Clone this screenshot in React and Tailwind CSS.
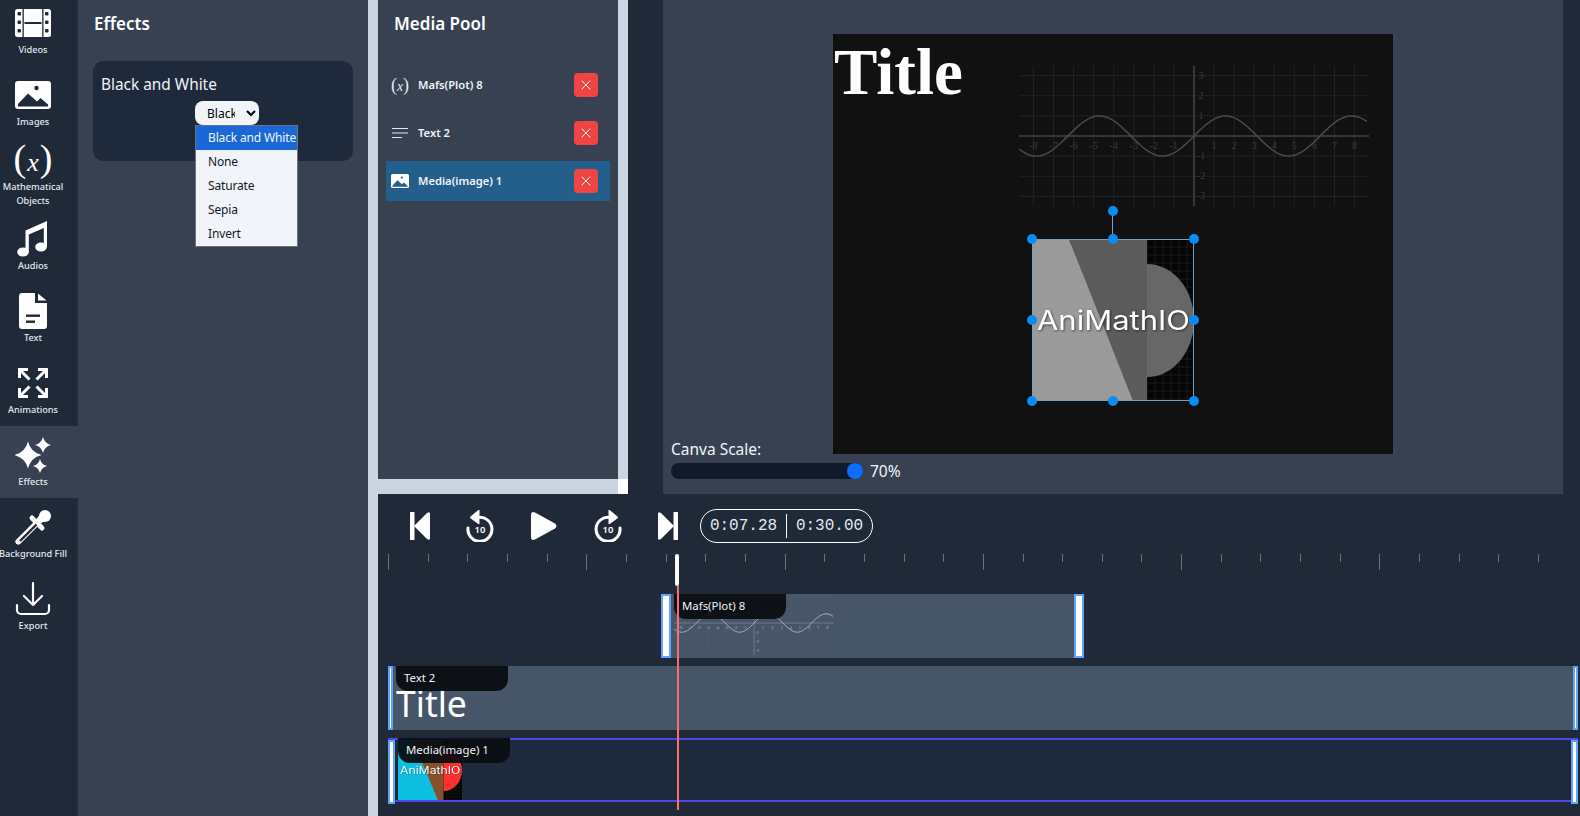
import React from 'react';
import { X } from 'lucide-react';

const uiFont = { fontFamily: '"Noto Sans", sans-serif' };

// sidebar icons, all on a 36x36 box
const FilmIcon = () => (
  <svg width="36" height="36" viewBox="0 0 36 36">
    <rect x="0" y="4" width="36" height="28" rx="2.5" fill="#fff" />
    {[7, 15.5, 24].map((y) => (
      <g key={y} fill="#1f2937">
        <rect x="2.5" y={y} width="3.5" height="3.5" rx="1" />
        <rect x="30" y={y} width="3.5" height="3.5" rx="1" />
      </g>
    ))}
    <rect x="7.5" y="4" width="1.3" height="28" fill="#1f2937" />
    <rect x="27.2" y="4" width="1.3" height="28" fill="#1f2937" />
    <rect x="9.5" y="17" width="17" height="2" fill="#1f2937" />
  </svg>
);

const ImageIcon = ({ size = 36, bg = '#1f2937' }) => (
  <svg width={size} height={size} viewBox="0 0 36 36">
    <rect x="0" y="4" width="36" height="28" rx="3" fill="#fff" />
    <circle cx="21.5" cy="11" r="2.2" fill={bg} />
    <path d="M3 29.500V27L13 16.500 22 24.500 25.500 21 33 27.500V29.500Z" fill={bg} />
  </svg>
);

const MathIcon = ({ className, xClass }) => (
  <span className={className} style={{ fontFamily: '"Liberation Serif", serif' }}>
    <span className="font-light">(</span>
    <i className={xClass}>x</i>
    <span className="font-light">)</span>
  </span>
);

const MusicIcon = () => (
  <svg width="36" height="36" viewBox="0 0 36 36" fill="#fff">
    <ellipse cx="8" cy="31" rx="5.800" ry="4.600" />
    <ellipse cx="26" cy="26" rx="5.800" ry="4.600" />
    <path d="M10.500 31V9.500L32 0V26H28.800V7L13.800 13.500V31Z" />
  </svg>
);

const FileIcon = () => (
  <svg width="36" height="36" viewBox="0 0 36 36">
    <path d="M7 0H20V10H32V33A3 3 0 0 1 29 36H7A3 3 0 0 1 4 33V3A3 3 0 0 1 7 0Z" fill="#fff" />
    <path d="M23 0.500 31.500 7.500H23Z" fill="#fff" />
    <rect x="11" y="21.500" width="14" height="2.400" fill="#1f2937" />
    <rect x="11" y="27.500" width="9" height="2.400" fill="#1f2937" />
  </svg>
);

const ArrowsIcon = () => (
  <svg width="36" height="36" viewBox="0 0 36 36" fill="none" stroke="#fff" strokeWidth="3">
    <path d="M4.500 13V4.500H13M4.500 4.500 14.500 14.500" />
    <path d="M31.500 13V4.500H23M31.500 4.500 21.500 14.500" />
    <path d="M4.500 23V31.500H13M4.500 31.500 14.500 21.500" />
    <path d="M31.500 23V31.500H23M31.500 31.500 21.500 21.500" />
  </svg>
);

const star = (cx, cy, r) =>
  `M${cx} ${cy - r}Q${cx + r * 0.2} ${cy - r * 0.2} ${cx + r} ${cy}Q${cx + r * 0.2} ${cy + r * 0.2} ${cx} ${cy + r}Q${cx - r * 0.2} ${cy + r * 0.2} ${cx - r} ${cy}Q${cx - r * 0.2} ${cy - r * 0.2} ${cx} ${cy - r}Z`;

const SparkIcon = () => (
  <svg width="36" height="36" viewBox="0 0 36 36" fill="#fff">
    <path d={star(13, 18, 13.5)} />
    <path d={star(28, 8, 8)} />
    <path d={star(25, 29, 7)} />
  </svg>
);

const DropperIcon = () => (
  <svg width="36" height="36" viewBox="0 0 36 36" fill="none">
    <circle cx="30" cy="7" r="6" fill="#fff" />
    <path d="M17 9 27 19" stroke="#fff" strokeWidth="5" strokeLinecap="round" />
    <path d="M26 4 32 10 24 16 20 12Z" fill="#fff" />
    <path d="M21 15 3.500 32.500" stroke="#fff" strokeWidth="6" strokeLinecap="round" />
    <path d="M21.500 15.500 5 32" stroke="#1f2937" strokeWidth="2.400" />
    <circle cx="2.500" cy="33.500" r="1.800" fill="#fff" />
  </svg>
);

const DownloadIcon = () => (
  <svg width="36" height="36" viewBox="0 0 36 36" fill="none" stroke="#fff" strokeWidth="2.200" strokeLinecap="round" strokeLinejoin="round">
    <path d="M18 2V24M9 15 18 24 27 15" />
    <path d="M2 24V29A4 4 0 0 0 6 33H30A4 4 0 0 0 34 29V24" />
  </svg>
);

const navItems = [
  { label: 'Videos', icon: <FilmIcon /> },
  { label: 'Images', icon: <ImageIcon /> },
  { label: 'Mathematical\nObjects', math: true },
  { label: 'Audios', icon: <MusicIcon /> },
  { label: 'Text', icon: <FileIcon /> },
  { label: 'Animations', icon: <ArrowsIcon /> },
  { label: 'Effects', icon: <SparkIcon />, active: true },
  { label: 'Background Fill', icon: <DropperIcon /> },
  { label: 'Export', icon: <DownloadIcon /> },
];

const Sidebar = () => (
  <aside className="w-[78px] shrink-0 bg-[#1f2937] overflow-hidden">
    <div className="-mt-[6px]">
      {navItems.map((item) => (
        <div
          key={item.label}
          className={`h-[72px] pr-3 flex flex-col items-center ${item.math ? 'pt-[4px]' : 'pt-[11px]'} ${item.active ? 'bg-[#374151]' : ''}`}
        >
          {item.math ? (
            <MathIcon className="h-[36px] text-[38px] leading-[32px] text-white whitespace-nowrap" xClass="text-[26px] mx-[1px]" />
          ) : (
            item.icon
          )}
          <span className="mt-[2px] text-[9.2px] leading-[14px] font-medium text-center text-[#e2e8f0] whitespace-pre">
            {item.label}
          </span>
        </div>
      ))}
    </div>
  </aside>
);

const EffectsPanel = () => (
  <section className="w-[290px] shrink-0 bg-[#374151]">
    <h2 className="pl-4 pt-[11px] text-[17px] leading-[26px] font-semibold text-white">Effects</h2>
    <div className="relative ml-[15px] mt-[24px] w-[260px] h-[100px] rounded-[10px] bg-[#1e293b] px-2 pt-[12px]">
      <p className="text-[15.4px] leading-6 text-[#f1f5f9]">Black and White</p>
      <select
        defaultValue="bw"
        className="block ml-[94px] mt-[4px] w-[64px] h-[24px] rounded-lg bg-[#f1f5f9] text-black text-[12px] pl-[8px] pr-[8px]"
      >
        <option value="bw">Black and White</option>
        <option>None</option>
        <option>Saturate</option>
        <option>Sepia</option>
        <option>Invert</option>
      </select>
      <ul className="absolute left-[102px] top-[64px] w-[103px] border border-[#6b7280] bg-[#f1f5f9] text-[12px] tracking-[-0.15px] leading-[24px] text-[#111827]">
        <li className="bg-[#1a68d6] text-[#f1f5f9] pl-[12px] whitespace-nowrap">Black and White</li>
        <li className="pl-[12px]">None</li>
        <li className="pl-[12px]">Saturate</li>
        <li className="pl-[12px]">Sepia</li>
        <li className="pl-[12px]">Invert</li>
      </ul>
    </div>
  </section>
);

const poolItems = [
  { name: 'Mafs(Plot) 8', kind: 'math' },
  { name: 'Text 2', kind: 'text' },
  { name: 'Media(image) 1', kind: 'image', active: true },
];

const MediaPool = () => (
  <div className="h-[479px] bg-[#374151]">
    <h2 className="pl-4 pt-[11px] text-[17px] leading-[26px] font-semibold text-white">Media Pool</h2>
    <div className="mt-[28px] ml-[8px] w-[224px] flex flex-col gap-2">
      {poolItems.map((item) => (
        <div key={item.name} className={`h-[40px] flex items-center pl-[5px] ${item.active ? 'bg-[#245e8a]' : ''}`}>
          <span className="w-[18px] flex justify-center shrink-0">
            {item.kind === 'math' && <MathIcon className="text-[18px] leading-none text-[#e2e8f0] whitespace-nowrap" xClass="text-[14px]" />}
            {item.kind === 'text' && (
              <svg width="18" height="14" viewBox="0 0 18 14" stroke="#e2e8f0" strokeWidth="1.2">
                <path d="M1 2.500H17M1 7H17M1 11.500H11" />
              </svg>
            )}
            {item.kind === 'image' && <ImageIcon size={18} bg="#245e8a" />}
          </span>
          <span className="ml-[9px] text-[11.2px] font-semibold text-[#f1f5f9]">{item.name}</span>
          <button className="ml-auto mr-[12px] w-6 h-6 rounded bg-[#ef4444] flex items-center justify-center text-white">
            <X size={16} strokeWidth={1.4} />
          </button>
        </div>
      ))}
    </div>
  </div>
);

// mafs style sine plot, drawn in a 350x140 box
const sinePath = () => {
  const pts = [];
  for (let px = 0; px <= 350; px += 3) {
    const t = (px - 175) / 20.07;
    pts.push(`${px} ${(70 - 20.1 * Math.sin(t)).toFixed(1)}`);
  }
  return 'M' + pts.join('L');
};

const xTicks = [-8, -7, -6, -5, -4, -3, -2, -1, 1, 2, 3, 4, 5, 6, 7, 8];
const yTicks = [3, 2, 1, -1, -2, -3];

const Plot = ({ width, height, grid, axis, curve, label }) => (
  <svg width={width} height={height} viewBox="0 0 350 140" preserveAspectRatio="none" className="block">
    <g stroke={grid} strokeWidth="1">
      {xTicks.map((t) => (
        <path key={t} d={`M${175 + t * 20.07} 0V140`} />
      ))}
      {yTicks.map((t) => (
        <path key={t} d={`M0 ${70 - t * 20.1}H350`} />
      ))}
    </g>
    <path d="M0 70H350M175 0V140" stroke={axis} strokeWidth="1.5" fill="none" />
    <path d={sinePath()} stroke={curve} strokeWidth="1.5" fill="none" />
    <g fill={label} fontSize="10" textAnchor="middle" style={{ fontFamily: '"Liberation Serif", serif' }}>
      {xTicks.map((t) => (
        <text key={t} x={175 + t * 20.07} y="83">{t}</text>
      ))}
      {yTicks.map((t) => (
        <text key={t} x="182" y={73 - t * 20.1}>{t}</text>
      ))}
    </g>
  </svg>
);

// the AniMathIO picture, used grey on the canvas and in colour on the track
const LogoPicture = ({ width, height, left, mid, round }) => (
  <svg width={width} height={height} viewBox="0 0 162 162" preserveAspectRatio="none" className="block">
    <rect width="162" height="162" fill="#050505" />
    <g stroke="#2c2c2c" strokeWidth="0.6">
      {[0, 1, 2, 3, 4, 5, 6].map((i) => (
        <path key={i} d={`M${115 + i * 8} 0V162`} />
      ))}
      {Array.from({ length: 21 }, (_, i) => (
        <path key={i} d={`M114 ${i * 8}H162`} />
      ))}
    </g>
    <path d="M115 25A47 56.500 0 0 1 115 138Z" fill={round} />
    <path d="M0 0H37L104 162H0Z" fill={left} />
    <path d="M37 0H115V162H101Z" fill={mid} />
    <text
      x="81.500"
      y="91"
      fontSize="27"
      textAnchor="middle"
      textLength="153"
      lengthAdjust="spacingAndGlyphs"
      fill="#fff"
      fontWeight="400"
      style={{ fontFamily: 'Inter, sans-serif', filter: 'drop-shadow(1px 1px 1px rgba(0,0,0,.5))' }}
    >
      AniMathIO
    </text>
  </svg>
);

const dot = 'absolute w-[10px] h-[10px] rounded-full bg-[#0a8cf5]';

const Canvas = () => (
  <div className="relative mx-auto mt-[34px] w-[560px] h-[420px] bg-[#111111]">
    <span
      className="absolute left-[1px] top-[1px] text-[65px] leading-[75px] font-bold text-white"
      style={{ fontFamily: '"Liberation Serif", serif' }}
    >
      Title
    </span>
    <div className="absolute left-[186px] top-[32px]">
      <Plot width={350} height={140} grid="#232323" axis="#444444" curve="#4a4a4a" label="#3d3d3d" />
    </div>
    <div className="absolute left-[199px] top-[205px] w-[162px] h-[162px]">
      <LogoPicture width={162} height={162} left="#9a9a9a" mid="#5b5b5b" round="#676767" />
      <div className="absolute inset-0 border border-[#7d9bc9]" />
      <div className="absolute left-[80px] -top-[29px] w-[1px] h-[29px] bg-[#7d9bc9]" />
      <span className={`${dot} left-[76px] -top-[33px]`} />
      <span className={`${dot} -left-[5px] -top-[5px]`} />
      <span className={`${dot} left-[76px] -top-[5px]`} />
      <span className={`${dot} -right-[5px] -top-[5px]`} />
      <span className={`${dot} -left-[5px] top-[76px]`} />
      <span className={`${dot} -right-[5px] top-[76px]`} />
      <span className={`${dot} -left-[5px] -bottom-[5px]`} />
      <span className={`${dot} left-[76px] -bottom-[5px]`} />
      <span className={`${dot} -right-[5px] -bottom-[5px]`} />
    </div>
  </div>
);

const Preview = () => (
  <div className="w-[900px] h-full bg-[#374151]">
    <Canvas />
    <div className="ml-2 -mt-[17px] w-[240px]">
      <p className="text-[15.5px] leading-6 text-[#f1f5f9]">Canva Scale:</p>
      <div className="mt-[2px] flex items-center h-4">
        <div className="relative w-[192px] h-4 rounded-full bg-[#111a2b]">
          <span className="absolute right-0 top-0 w-4 h-4 rounded-full bg-[#0d6efd]" />
        </div>
        <span className="ml-[7px] text-[15.5px] leading-6 text-[#f1f5f9]">70%</span>
      </div>
    </div>
  </div>
);

const SkipBack = () => (
  <svg width="20" height="28" viewBox="0 0 20 28" fill="#fff" className="block">
    <rect x="0" y="0" width="4.500" height="28" rx="0.5" />
    <path d="M4 14 17 1Q20 -1 20 2V26Q20 29 17 27Z" />
  </svg>
);

const SkipNext = () => (
  <svg width="20" height="28" viewBox="0 0 20 28" fill="#fff" className="block">
    <rect x="15.500" y="0" width="4.500" height="28" rx="0.5" />
    <path d="M16 14 3 1Q0 -1 0 2V26Q0 29 3 27Z" />
  </svg>
);

const PlayIcon = () => (
  <svg width="26" height="28" viewBox="0 0 26 28" fill="#fff" className="block">
    <path d="M0 3Q0 -1 4 0.500L24 11.500Q27 14 24 16.500L4 27.500Q0 29 0 25Z" />
  </svg>
);

const Seek = ({ flip }) => (
  <div className="relative w-[28px] h-[32px]">
    <svg width="28" height="32" viewBox="0 0 28 32" fill="none" className={flip ? 'block -scale-x-100' : 'block'}>
      <path d="M12 7.500A12 12 0 1 1 2 18" stroke="#fff" strokeWidth="3" strokeLinecap="round" />
      <path d="M13 0V14L4 7.500Z" fill="#fff" stroke="#fff" strokeLinejoin="round" />
    </svg>
    <span className="absolute left-0 right-0 top-[14px] text-center text-[9.5px] leading-[12px] font-semibold text-white">10</span>
  </div>
);

const Ruler = () => (
  <div className="flex h-4 ml-[10px]">
    {Array.from({ length: 30 }, (_, i) => (
      <div key={i} className="w-[39.66px] shrink-0">
        <div className={`w-[1px] bg-[#6b7280] ${i % 5 === 0 ? 'h-4' : 'h-2'}`} />
      </div>
    ))}
  </div>
);

const Handle = ({ w }) => <div className={`${w} h-full shrink-0 border-2 border-[#60a5fa] bg-white`} />;

const TrackLabel = ({ text, left }) => (
  <div className={`absolute ${left} top-0 w-[112px] h-[25px] rounded-b-xl bg-[#0b0e12]/95 pl-[8px] text-[11.4px] leading-[24px] text-[#f1f5f9]`}>
    {text}
  </div>
);

const Timeline = () => (
  <div className="relative flex-1 bg-[#1f2937]">
    <div className="h-[60px] flex items-start pt-[15px] pl-[32px]">
      <div className="mt-[3px]"><SkipBack /></div>
      <div className="ml-[36px] mt-[1px]"><Seek /></div>
      <div className="ml-[37px] mt-[3px]"><PlayIcon /></div>
      <div className="ml-[37px] mt-[1px]"><Seek flip /></div>
      <div className="ml-[36px] mt-[3px]"><SkipNext /></div>
      <div
        className="ml-[22px] w-[173px] h-[34px] rounded-full border border-white flex items-center text-[16px] text-[#e2e8f0]"
        style={{ fontFamily: '"Liberation Mono", monospace' }}
      >
        <span className="w-[85px] text-center">0:07.28</span>
        <span className="w-[1px] h-[24px] bg-white" />
        <span className="flex-1 text-center">0:30.00</span>
      </div>
    </div>
    <Ruler />
    <div className="mt-[24px] pl-[10px] flex flex-col gap-2">
      <div className="relative ml-[273px] w-[423px] h-16 bg-[#475569] flex justify-between">
        <Handle w="w-[10px]" />
        <div className="absolute left-[13px] top-0 h-16 overflow-hidden">
          <div className="-mt-[3px]">
            <Plot width={160} height={64} grid="#525f72" axis="#808a99" curve="#cbd5e1" label="#aab2be" />
          </div>
        </div>
        <TrackLabel text="Mafs(Plot) 8" left="left-[13px]" />
        <Handle w="w-[10px]" />
      </div>
      <div className="relative w-[1190px] h-16 bg-[#475569] flex justify-between">
        <Handle w="w-[5px]" />
        <span className="absolute left-[8px] top-[12px] text-[35.5px] leading-[50px] text-white">Title</span>
        <TrackLabel text="Text 2" left="left-[8px]" />
        <Handle w="w-[5px]" />
      </div>
      <div className="relative w-[1190px] h-16 flex justify-between">
        <div className="absolute inset-0 border-y-2 border-[#4f46e5] bg-[#1e293b]" />
        <div className="relative mt-[2px] h-16 flex items-start">
          <Handle w="w-[7px]" />
          <div className="ml-[3px]">
            <LogoPicture width={64} height={60} left="#0ec0e0" mid="#8a4f2c" round="#ff3030" />
          </div>
        </div>
        <TrackLabel text="Media(image) 1" left="left-[10px]" />
        <div className="relative mt-[2px] h-16">
          <Handle w="w-[7px]" />
        </div>
      </div>
    </div>
    {/* playhead */}
    <div className="absolute left-[297px] top-[60px] w-1 h-8 rounded-full bg-white" />
    <div className="absolute left-[299px] top-[92px] w-[2px] h-[224px] bg-[#f87171]" />
  </div>
);

const App = () => (
  <div className="flex h-screen overflow-hidden bg-[#cbd5e1]" style={uiFont}>
    <Sidebar />
    <EffectsPanel />
    <div className="w-[10px] shrink-0 bg-[#cbd5e1]" />
    <div className="flex-1 flex flex-col min-w-0">
      <div className="h-[494px] shrink-0 flex bg-[#1f2937]">
        <div className="w-[240px] shrink-0 bg-[#cbd5e1]">
          <MediaPool />
        </div>
        <div className="w-[10px] shrink-0 bg-[#cbd5e1] flex flex-col justify-end">
          <div className="h-[15px] bg-white" />
        </div>
        <div className="w-[35px] shrink-0" />
        <Preview />
      </div>
      <Timeline />
    </div>
  </div>
);

export default App;
